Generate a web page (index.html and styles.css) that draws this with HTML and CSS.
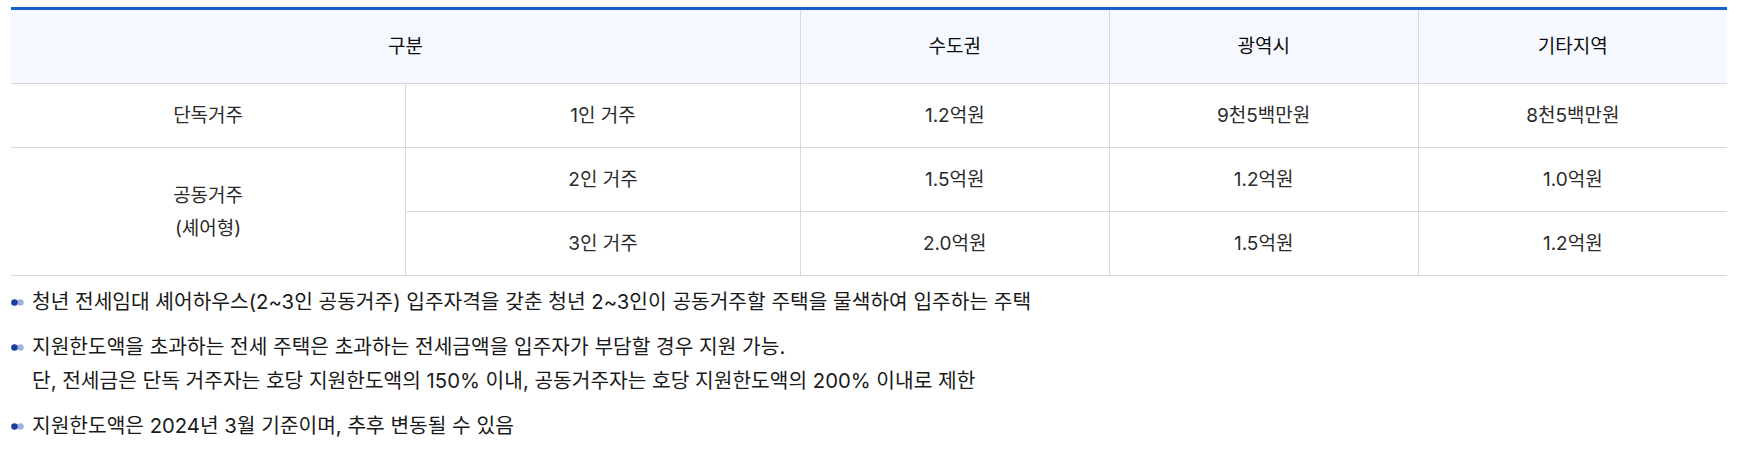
FILE: index.html
```html
<!DOCTYPE html>
<html lang="ko">
<head>
<meta charset="utf-8">
<title>청년 전세임대 셰어하우스 지원한도액</title>
<link rel="stylesheet" href="styles.css">
</head>
<body>
<div class="wrap">
  <div class="table-box">
    <table class="limit-table">
      <colgroup>
        <col class="c-wide"><col class="c-wide"><col class="c-narrow"><col class="c-narrow"><col class="c-narrow">
      </colgroup>
      <thead>
        <tr>
          <th colspan="2">구분</th>
          <th>수도권</th>
          <th>광역시</th>
          <th>기타지역</th>
        </tr>
      </thead>
      <tbody>
        <tr>
          <td>단독거주</td>
          <td>1인 거주</td>
          <td>1.2억원</td>
          <td>9천5백만원</td>
          <td>8천5백만원</td>
        </tr>
        <tr>
          <td rowspan="2" class="two-line">공동거주<br>(셰어형)</td>
          <td>2인 거주</td>
          <td>1.5억원</td>
          <td>1.2억원</td>
          <td>1.0억원</td>
        </tr>
        <tr>
          <td>3인 거주</td>
          <td>2.0억원</td>
          <td>1.5억원</td>
          <td>1.2억원</td>
        </tr>
      </tbody>
    </table>
  </div>
  <ul class="notes">
    <li><span class="dot"><svg width="13" height="7" viewBox="0 0 13 7"><circle cx="9.5" cy="3.5" r="3.2" fill="#9fb1e3"/><circle cx="3.5" cy="3.5" r="3.3" fill="#1b3f9f"/></svg></span><p>청년 전세임대 셰어하우스(2~3인 공동거주) 입주자격을 갖춘 청년 2~3인이 공동거주할 주택을 물색하여 입주하는 주택</p></li>
    <li><span class="dot"><svg width="13" height="7" viewBox="0 0 13 7"><circle cx="9.5" cy="3.5" r="3.2" fill="#9fb1e3"/><circle cx="3.5" cy="3.5" r="3.3" fill="#1b3f9f"/></svg></span><p>지원한도액을 초과하는 전세 주택은 초과하는 전세금액을 입주자가 부담할 경우 지원 가능.<br>단, 전세금은 단독 거주자는 호당 지원한도액의 150% 이내, 공동거주자는 호당 지원한도액의 200% 이내로 제한</p></li>
    <li><span class="dot"><svg width="13" height="7" viewBox="0 0 13 7"><circle cx="9.5" cy="3.5" r="3.2" fill="#9fb1e3"/><circle cx="3.5" cy="3.5" r="3.3" fill="#1b3f9f"/></svg></span><p>지원한도액은 2024년 3월 기준이며, 추후 변동될 수 있음</p></li>
  </ul>
</div>
</body>
</html>
```

FILE: styles.css
```css
html, body {
  margin: 0;
  padding: 0;
  background: #ffffff;
}

body {
  font-family: "Inter", "Noto Sans CJK KR", "Noto Sans", sans-serif;
  color: #1a1a1a;
}

.wrap {
  padding: 7px 12px 0 11px;
}

.table-box {
  border-top: 3px solid #1a5fcf;
}

.limit-table {
  width: 100%;
  border-collapse: collapse;
  table-layout: fixed;
  font-size: 19px;
}

.c-wide { width: 23%; }
.c-narrow { width: 18%; }

.limit-table th,
.limit-table td {
  padding: 0;
  text-align: center;
  vertical-align: middle;
  border-bottom: 1px solid #d9d9d9;
  border-left: 1px solid #d9d9d9;
  line-height: 33px;
}

.limit-table th:first-child,
.limit-table tbody tr:first-child td:first-child,
.limit-table td.two-line {
  border-left: none;
}

.limit-table th {
  height: 73px;
  background: #f5f9ff;
  color: #0d0d0d;
  font-weight: 400;
}

.limit-table td {
  height: 63px;
  color: #2b2b2b;
}

.notes {
  list-style: none;
  margin: 9px 0 0 0;
  padding: 0;
  font-size: 20.3px;
  line-height: 34px;
  color: #1a1a1a;
}

.notes li {
  display: flex;
  align-items: flex-start;
  gap: 8px;
  margin-bottom: 11px;
}

.notes .dot {
  display: flex;
  align-items: center;
  height: 34px;
  flex: none;
}

.notes .dot svg {
  display: block;
}

.notes p {
  margin: 0;
}
```
